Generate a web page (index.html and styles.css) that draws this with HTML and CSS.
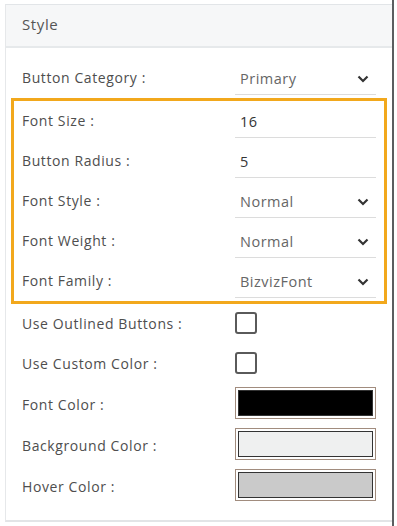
FILE: index.html
```html
<!DOCTYPE html>
<html>
<head>
<meta charset="utf-8">
<link rel="stylesheet" href="styles.css">
</head>
<body>
<div class="frame">
  <div class="panel">
    <div class="panel-head">Style</div>
    <div class="panel-body">
      <div class="row">
        <div class="label">Button Category :</div>
        <div class="select"><span>Primary</span><svg class="chev" width="12" height="8" viewBox="0 0 12 8"><path d="M1.5 1.5 L6 6 L10.5 1.5" fill="none" stroke="#333" stroke-width="2.2"/></svg></div>
      </div>
      <div class="highlight">
        <div class="row">
          <div class="label">Font Size :</div>
          <div class="input">16</div>
        </div>
        <div class="row">
          <div class="label">Button Radius :</div>
          <div class="input">5</div>
        </div>
        <div class="row">
          <div class="label">Font Style :</div>
          <div class="select"><span>Normal</span><svg class="chev" width="12" height="8" viewBox="0 0 12 8"><path d="M1.5 1.5 L6 6 L10.5 1.5" fill="none" stroke="#333" stroke-width="2.2"/></svg></div>
        </div>
        <div class="row">
          <div class="label">Font Weight :</div>
          <div class="select"><span>Normal</span><svg class="chev" width="12" height="8" viewBox="0 0 12 8"><path d="M1.5 1.5 L6 6 L10.5 1.5" fill="none" stroke="#333" stroke-width="2.2"/></svg></div>
        </div>
        <div class="row">
          <div class="label">Font Family :</div>
          <div class="select"><span>BizvizFont</span><svg class="chev" width="12" height="8" viewBox="0 0 12 8"><path d="M1.5 1.5 L6 6 L10.5 1.5" fill="none" stroke="#333" stroke-width="2.2"/></svg></div>
        </div>
      </div>
      <div class="row">
        <div class="label">Use Outlined Buttons :</div>
        <div class="ctl"><span class="check"></span></div>
      </div>
      <div class="row">
        <div class="label">Use Custom Color :</div>
        <div class="ctl"><span class="check"></span></div>
      </div>
      <div class="row crow">
        <div class="label">Font Color :</div>
        <div class="ctl"><span class="swatch"><span class="fill black"></span></span></div>
      </div>
      <div class="row crow">
        <div class="label">Background Color :</div>
        <div class="ctl"><span class="swatch"><span class="fill light"></span></span></div>
      </div>
      <div class="row crow">
        <div class="label">Hover Color :</div>
        <div class="ctl"><span class="swatch"><span class="fill grey"></span></span></div>
      </div>
    </div>
  </div>
</div>
</body>
</html>
```
FILE: styles.css
```css
html, body {
  margin: 0;
  padding: 0;
  background: #ffffff;
}
body {
  font-family: "Open Sans", "Liberation Sans", sans-serif;
  color: #555;
}
.frame {
  width: 394px;
  height: 526px;
  border-right: 2px solid #5b5e60;
  padding-top: 4px;
  box-sizing: border-box;
}
.panel {
  margin-left: 5px;
  border-top: 1px solid #e2e5e8;
  border-left: 1px solid #e6e8ea;
  border-bottom: 2px solid #e2e4e6;
  height: 518px;
  box-sizing: border-box;
}
.panel-head {
  height: 43px;
  background: #f6f7f8;
  border-bottom: 2px solid #e6e9eb;
  box-sizing: border-box;
  padding-left: 16px;
  padding-top: 9px;
  font-size: 15px;
  letter-spacing: 0.6px;
  color: #555;
}
.panel-body {
  padding-top: 10px;
}
.row {
  display: flex;
  align-items: center;
  height: 40px;
  padding-left: 16px;
}
.label {
  width: 213px;
  font-size: 14px;
  letter-spacing: 0.6px;
  color: #4e4e4e;
  margin-top: -1px;
}
.highlight {
  margin: 0 5px 0 5px;
  border: 3px solid #f2a81c;
}
.highlight .row {
  padding-left: 8px;
}
.select, .input {
  width: 141px;
  height: 32px;
  border-bottom: 1px solid #dcdcdc;
  box-sizing: border-box;
  display: flex;
  align-items: center;
  justify-content: space-between;
  padding-left: 5px;
  padding-right: 7px;
  font-size: 14.5px;
  letter-spacing: 0.5px;
  margin-top: 2px;
}
.select span {
  color: #666;
}
.input {
  color: #333;
}
.chev {
  display: block;
}
.ctl {
  width: 141px;
  display: flex;
  align-items: center;
}
.check {
  display: block;
  width: 22px;
  height: 22px;
  border: 2px solid #5a5a5a;
  border-radius: 3px;
  box-sizing: border-box;
  margin-top: -2px;
}
.crow {
  height: 41px;
}
.swatch {
  display: block;
  width: 141px;
  height: 32px;
  border: 1px solid #a18c7e;
  box-sizing: border-box;
  padding: 2px;
  margin-top: -4px;
}
.fill {
  display: block;
  height: 100%;
  border: 1px solid #333;
  box-sizing: border-box;
}
.black { background: #000; }
.light { background: #eff0f0; }
.grey { background: #cacaca; }
```
